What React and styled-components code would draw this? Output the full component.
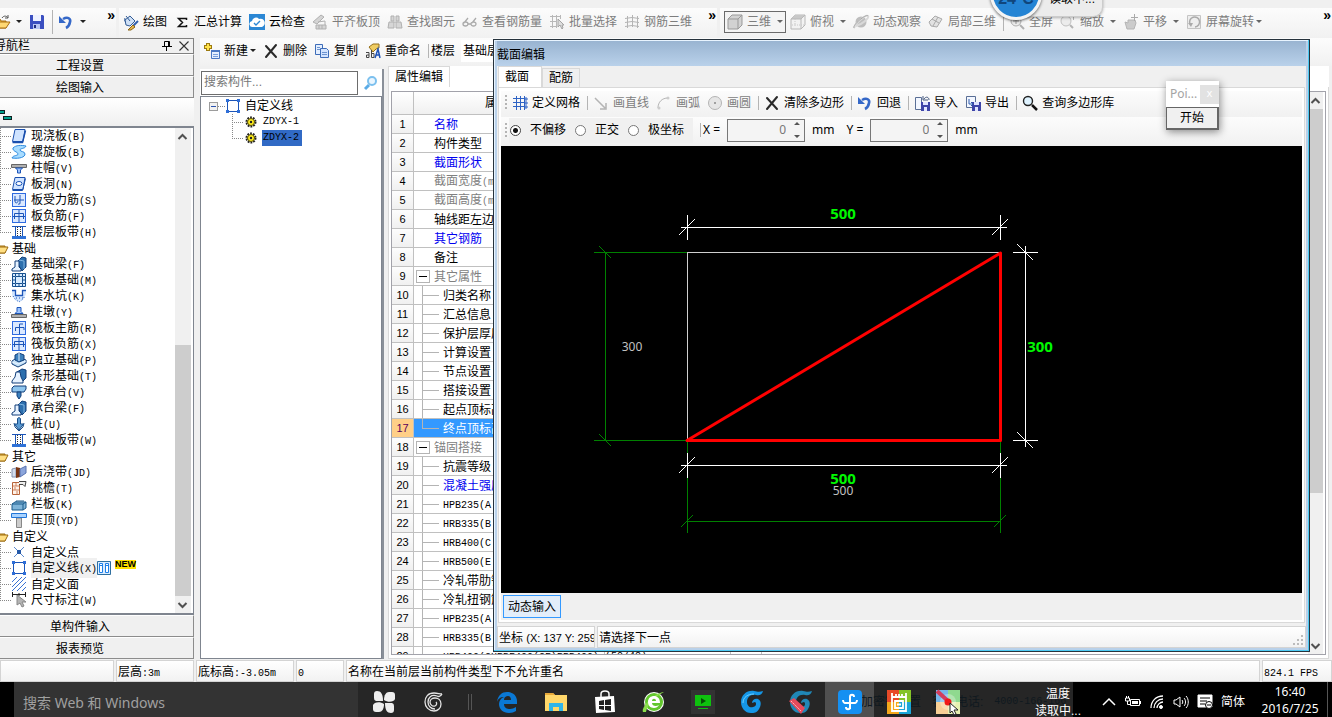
import React from 'react'
import styled, { createGlobalStyle, css } from 'styled-components'

/* Font stacks: interface text, and the half width face of the tree labels    */
const UI = '"Liberation Sans", "Noto Sans CJK SC", sans-serif'
const MONO = '"Liberation Mono", "Noto Sans CJK SC", monospace'

const GlobalStyle = createGlobalStyle`
  * { box-sizing: border-box; }
  body {
    margin: 0;
    overflow: hidden;
    background: #f0f0f0;
    color: #000;
    font: 12px/16px ${UI};
  }
  button, input, select { font: inherit; color: inherit; }
`

/* ------------------------------- Icons ------------------------------------ */

const Svg = styled.svg`
  flex: none;
  display: block;
  overflow: visible;
  width: ${p => p.$size || 16}px;
  height: ${p => p.$size || 16}px;
`

const B = '#1c55b8'
const sq = <rect x="1.5" y="1.5" width="13" height="13" fill="#dbe9ff" stroke="#2f6be0" />
const beam = (
  <>
    <path d="M6 6l5-5 4 1v9l-4 4z" fill="#2c6fae" stroke="#123f7a" />
    <path d="M8 4l5 1v8" stroke="#7fb4e0" fill="none" />
    <path d="M1 15v-2l3-2V5h4v6l2 2v2z" fill="#e6f2ff" stroke="#123f7a" />
  </>
)
const corners = (
  <>
    <path d="M2.5 2.5h11v11h-11z" fill="#fff" stroke={B} />
    <path d="M1 1h3v3H1zM12 1h3v3h-3zM1 12h3v3H1zM12 12h3v3h-3z" fill="#2e6ed8" />
  </>
)

const drawings = {
  slab: (
    <>
      <path d="M4 1.5h10l-2 12H1.500z" fill="#cfe3ff" stroke="#1a4fae" />
      <path d="M1.500 14.500h10l3-12" stroke="#1a4fae" strokeWidth="1.500" fill="none" />
    </>
  ),
  spiral: <path d="M2 4c3-3 8-3 13-2-1 3-6 2-6 4s5 1 5 4-5 5-13 4c1-3 6-2 6-4S1 7 2 4z" fill="#a8dcff" stroke="#2c8ae0" />,
  cap: (
    <>
      <path d="M.5 4.500h15v3H.5z" fill="#b0b0b0" stroke="#666" />
      <path d="M4.500 8h7l-2 2v3h-3v-3z" fill="#9cc4ff" stroke={B} />
    </>
  ),
  hole: (
    <>
      <path d="M4 1.5h10l-2 12H1.500z" fill="#cfe3ff" stroke="#1a4fae" />
      <path d="M1.500 14.500h10l3-12" stroke="#1a4fae" fill="none" />
      <ellipse cx="8" cy="7.5" rx="3" ry="2" fill="#fff" stroke={B} />
    </>
  ),
  force: <>{sq}<path d="M4 4v5c0 3 3 2 3 0M13 8H3M9 3v8c0 2-2 1-2 1" fill="none" stroke={B} /></>,
  neg: <>{sq}<path d="M3.500 11V5.500h9V11M8 2v12M2 8.500h12" fill="none" stroke={B} /></>,
  main: <>{sq}<path d="M4.500 11V7.500H13V10M8.500 14V4H12" fill="none" stroke={B} /></>,
  strip: (
    <>
      <path d="M1 12h14v3H1z" fill="#2f72d8" />
      <path d="M1 2.500h14M4.500 3v9M11.500 3v9" stroke={B} />
      <path d="M6.500 3v9M9.500 3v9" stroke="#333" strokeDasharray="1 1" />
    </>
  ),
  folder: (
    <>
      <path d="M1 13V4h5l1 2h6v7z" fill="#f6c64c" stroke="#9b6a10" />
      <path d="M1 13l3-6h12l-3 6z" fill="#ffdf83" stroke="#9b6a10" />
    </>
  ),
  beam,
  raft: <path d="M1.500 1.500h13v13h-13zM4.500 4.500h7v7h-7zM4.500 1v3M8 1v3M11.500 1v3M4.500 12v3M8 12v3M11.500 12v3M1 4.500h3M1 8h3M1 11.500h3M12 4.500h3M12 8h3M12 11.500h3" fill="#d8ecff" stroke="#17508f" />,
  pit: (
    <>
      <path d="M1 3h4v5h6V3h4v3l-3 6-4 2-4-2-3-5z" fill="#d3e6ff" />
      <path d="M1 2.500h3.500v5h7v-5H15" fill="none" stroke={B} strokeWidth="1.300" />
      <path d="M2 8l2 3 4 3 4-3 2-3M5 10h7" fill="none" stroke={B} strokeDasharray="1 2" />
    </>
  ),
  pier: (
    <>
      <path d="M.5 10.500h15v3H.5z" fill="#b0b0b0" stroke="#666" />
      <path d="M6 3.500h4v4l2 2H4l2-2z" fill="#9cc4ff" stroke={B} />
    </>
  ),
  indep: (
    <>
      <path d="M1 9l6-4 8 3v3l-8 4-6-3z" fill="#c4e1f7" stroke="#123f7a" />
      <path d="M4 3l4-2 5 2v5l-5 2-4-2z" fill="#3c80bd" stroke="#123f7a" />
      <path d="M8 1v8M1 10l6 2 8-3" fill="none" stroke="#e6f2ff" />
    </>
  ),
  bar: (
    <>
      <path d="M6 4l5-3 4 1v8l-4 4z" fill="#2c6fae" stroke="#123f7a" />
      <path d="M1 15v-2l3-4 1-5h4l1 5 2 4v2z" fill="#e6f2ff" stroke="#123f7a" />
    </>
  ),
  pilecap: (
    <>
      <path d="M1 4l2-2h12v3l-2 3H1z" fill="#8ec5ee" stroke="#123f7a" />
      <path d="M6 8h4v4l-2 3-2-3z" fill="#3c80bd" stroke="#123f7a" />
    </>
  ),
  pile: (
    <>
      <path d="M6.500 2.500l1.500-1 1.500 1V8h3L8 14 3.500 8h3z" fill="#5c9cd4" stroke="#1b4f8a" />
      <path d="M3 7l1 4 4 4 4-4 1-4" fill="none" stroke="#1b4f8a" />
    </>
  ),
  pour: (
    <>
      <path d="M1 5l4-1v9H1z" fill="#d4dcea" stroke="#8693b0" />
      <path d="M5 3l4 1v9l-4 1z" fill="#7a3512" />
      <path d="M9 5l6-3v7l-6 4z" fill="#8ba5db" stroke="#5872b0" />
    </>
  ),
  eave: (
    <>
      <path d="M1.500 2.500h7v12h-7z" fill="#fff3e8" stroke="#b8643a" />
      <path d="M2 6h6M2 10h6M5 3v3M4 7v3M6 11v3" stroke="#d08460" />
      <path d="M8 1.500h7l-1 5-2-2H8" fill="#eee" stroke="#444" />
    </>
  ),
  rail: (
    <>
      <path d="M1 8l3-2h11v6l-3 2H1z" fill="#7fb4d8" stroke="#1b5a8a" />
      <path d="M1 8h11v6M12 8l3-2M5 6v-1h8" fill="none" stroke="#1b5a8a" />
    </>
  ),
  press: (
    <>
      <path d="M5.500 6h5v9.500h-5z" fill="#ccc" stroke="#888" />
      <path d="M.5 1.500h15v4H.5z" fill="#a9d3ff" stroke="#2276d8" />
    </>
  ),
  point: (
    <>
      <path d="M3 3l10 10M13 3L3 13" stroke="#5c8ace" />
      <path d="M6 6h4v4H6z" fill="#2458a8" />
    </>
  ),
  line: corners,
  area: <path d="M1 6l5-5M1 11L11 1M1 15L15 1M6 15l9-9M11 15l4-4" stroke="#3a72d4" />,
  note: (
    <>
      <path d="M1 2.500h14M1.500 0v5M14.500 0v5M8 1v3" stroke="#222" />
      <path d="M6 3v10l3-2 2 4 2-1-2-4h4z" fill="#b4b4b4" stroke="#888" />
    </>
  ),
  gear: (
    <>
      <circle cx="8" cy="8" r="4.500" fill="none" stroke="#222" strokeWidth="2" strokeDasharray="1.800 1.020" />
      <circle cx="8" cy="8" r="3.500" fill="#ffee20" stroke="#554c00" />
      <circle cx="8" cy="8" r="1.200" fill="#222" />
    </>
  ),
  open: (
    <>
      <path d="M1 14V5h5l1 2h5v7z" fill="#f3bb3c" stroke="#a86c10" />
      <path d="M1 14l3-6h12l-4 6z" fill="#ffd873" stroke="#a86c10" />
      <path d="M8 4c2-3 5-2 6 0M14 1v3h-3" fill="none" stroke="#555" />
    </>
  ),
  save: (
    <>
      <path d="M1 1h13l1 1v13H1z" fill="#3b4fc0" />
      <path d="M4 1h8v6H4z" fill="#eef2ff" />
      <path d="M4 10h7v5H4z" fill="#b9c6f3" />
      <path d="M5 11h2v3H5z" fill="#1f2d80" />
    </>
  ),
  undo: (
    <>
      <path d="M5 5c5-3 8 0 7 3-.500 3-2 5-4 6" fill="none" stroke="#3568c8" strokeWidth="2.600" />
      <path d="M1 2v7h7z" fill="#3568c8" />
    </>
  ),
  paint: (
    <>
      <path d="M2 6l5-4 5 5-5 5-4-1z" fill="#cfe0f5" stroke="#335c96" />
      <path d="M3 2l4 5M2 4c-1 2 0 4 1 4" fill="none" stroke="#335c96" />
      <path d="M15 7l-5 5" stroke="#2f5fae" strokeWidth="2" />
      <path d="M10 11l2 2-4 3H5z" fill="#e7b44a" stroke="#8a6414" />
    </>
  ),
  sum: <path d="M12.500 6V4.500h-8l4 4-4 4h8V11" fill="none" stroke="#111" strokeWidth="1.500" />,
  cloud: (
    <>
      <path d="M0 0h16v16H0z" fill="#2b87d4" />
      <path d="M4 13a3 3 0 0 1-1-6 4 4 0 0 1 7-2 4 4 0 0 1 3 8z" fill="#fff" />
      <path d="M5 9l2 2 4-4" fill="none" stroke="#2b87d4" strokeWidth="1.400" />
    </>
  ),
  level: (
    <>
      <path d="M1 8l8-7 3 2-7 7zM4 11h10v4H4z" fill="#d4d4d4" stroke="#b0b0b0" />
      <path d="M6 8l7-1v4M7 11v4M10 11v4" fill="none" stroke="#b0b0b0" />
    </>
  ),
  find: <path d="M4 2h3v5H4zM9 2h3v5H9zM2 8h5v6H1zM9 8h5l1 6H9zM7 8h2" fill="#d6d6d6" stroke="#b0b0b0" />,
  glasses: <path d="M2 9l4-5M10 9l4-5M1 10a2.500 2 0 1 0 5 0a2.500 2 0 1 0-5 0M9 10a2.500 2 0 1 0 5 0a2.500 2 0 1 0-5 0M6 10h3" fill="none" stroke="#aaa" strokeWidth="1.300" />,
  pick: (
    <>
      <path d="M1 2.500h11M1 7.500h7M1 12.500h7M3.500 1v13M7.500 1v13M11.500 1v4" stroke="#b8b8b8" />
      <path d="M9 5v8l2-2 2 4 1-1-1-3h2z" fill="#ddd" stroke="#a4a4a4" />
    </>
  ),
  rebar: <path d="M3.500 2v12M8.500 1v12M13.500 2v12M1 4.500l7-1 7 1M1 8.500l7-1 7 1M1 12.500l7-1 7 1" fill="none" stroke="#b4b4b4" />,
  cube: (
    <>
      <path d="M1 5l4-4h10v10l-4 4H1z" fill="#d2d2d2" stroke="#999" />
      <path d="M1 5h10v10M11 5l4-4" fill="none" stroke="#999" />
    </>
  ),
  wire: (
    <>
      <path d="M1 5l4-4h10v10l-4 4H1z" fill="#f2f2f2" stroke="#b8b8b8" />
      <path d="M1 5l4-4h10l-4 4z" fill="#c8c8c8" />
      <path d="M1 5h10v10M11 5l4-4" fill="none" stroke="#b8b8b8" />
      <path d="M5 1v10H1M5 11h10" fill="none" stroke="#c8c8c8" strokeDasharray="1 1" />
    </>
  ),
  orbit: (
    <>
      <circle cx="8" cy="8" r="5.500" fill="#bdbdbd" />
      <path d="M2 14C-1 12 13 0 15 2s-7 9-12 10" fill="none" stroke="#d8d8d8" strokeWidth="2" />
      <path d="M1 14C-1 11 14-1 15 2" fill="none" stroke="#a8a8a8" />
    </>
  ),
  part: <path d="M1 8l6-6 7 3-5 8-6-1zM4 5l7 4M10 3L5 12" fill="#e2e2e2" stroke="#aaa" />,
  zoomin: (
    <>
      <circle cx="7" cy="7" r="5" fill="#ececec" stroke="#b0b0b0" />
      <path d="M11 11l4 4" stroke="#b0b0b0" strokeWidth="2" />
      <path d="M4 7h6M7 4v6" stroke="#999" />
    </>
  ),
  zoom: (
    <>
      <circle cx="6" cy="7" r="5" fill="#ececec" stroke="#c0c0c0" />
      <path d="M10 11l3 3" stroke="#b4b4b4" strokeWidth="2" />
      <path d="M13.500 1v5M12 3l1.500-2L15 3" fill="none" stroke="#b4b4b4" />
    </>
  ),
  pan: (
    <>
      <path d="M2 8l3 1V6h7l1 3-2 6H4z" fill="#cbcbcb" stroke="#b4b4b4" />
      <path d="M11.500 0v7M8 3.500h7" stroke="#aaa" />
    </>
  ),
  rotate: (
    <>
      <path d="M1.500 1.500h13v13h-13z" fill="#eee" stroke="#c4c4c4" />
      <path d="M4 10a5 5 0 1 1 5 3" fill="none" stroke="#aaa" strokeWidth="1.500" />
      <path d="M2 9l5 0-2 4z" fill="#aaa" />
    </>
  ),
  create: (
    <>
      <path d="M4 0v8M0 4h8" stroke="#9c7a10" strokeWidth="4" />
      <path d="M4 1v6M1 4h6" stroke="#ffe24a" strokeWidth="2" />
      <path d="M7.500 7.500h8v8h-8z" fill="#e4efff" stroke="#4a78c4" />
      <path d="M7 7h9v2H7z" fill="#4a78c4" />
      <path d="M9 11.500h5M9 13.500h5" stroke="#7aa0dc" />
    </>
  ),
  cross: <path d="M3 3l10 11M13 2L3 14" stroke="#2a2a2a" strokeWidth="2" strokeLinecap="round" />,
  copy: (
    <>
      <path d="M1.500 1.500h7v10h-7z" fill="#e4efff" stroke="#3e6db8" />
      <path d="M6.500 5.500h6l2 2v7h-8z" fill="#d3e4ff" stroke="#3e6db8" />
      <path d="M8 9.500h5M8 11.500h5M3 4.500h3M3 6.500h3" stroke="#6b93d0" />
    </>
  ),
  rename: (
    <>
      <path d="M4 4l4-3h6v4l-3 1-3 3z" fill="#f0cd62" stroke="#96701a" />
      <path d="M1 9.500h3v5H1.500v-2.500H4M6.500 7v7.500H9v-4H6.500" fill="none" stroke="#444" />
      <path d="M10 15l3-9 2 9M11 12h4" fill="none" stroke="#1e53b8" strokeWidth="1.500" />
    </>
  ),
  search: (
    <>
      <circle cx="9" cy="6" r="4" fill="#eaf6ff" stroke="#7cc0ee" strokeWidth="2" />
      <path d="M6 10l-4 4" stroke="#5aabe6" strokeWidth="3" />
    </>
  ),
  grid: (
    <>
      <path d="M4.500 1v14M8.500 1v14M12.500 1v14M1 3.500h12M1 7.500h12M1 11.500h12" stroke="#2f63c4" />
      <path d="M13 3h2v2h-2zM13 7h2v2h-2zM13 11h2v2h-2z" fill="none" stroke="#2f63c4" />
    </>
  ),
  arrow: <path d="M2 3l10 10M13 8v6H7" fill="none" stroke="#b4b4b4" strokeWidth="1.500" />,
  arc: (
    <>
      <path d="M2 13C2 7 6 3 12 3" fill="none" stroke="#b4b4b4" />
      <circle cx="3" cy="13" r="1.500" fill="#ccc" />
      <circle cx="12" cy="3" r="1.500" fill="#ccc" />
    </>
  ),
  circle: (
    <>
      <circle cx="8" cy="8" r="6.500" fill="#e6e6e6" stroke="#b4b4b4" />
      <circle cx="8" cy="8" r="1" fill="#888" />
    </>
  ),
  importIcon: (
    <>
      <path d="M1.500 2.500h6v12h-6z" fill="#f3f7ff" stroke="#5a6f96" />
      <path d="M7 7h9v9H7z" fill="#3e45a8" />
      <path d="M9 7h5v3H9zM10 12h3v4h-3z" fill="#e1e5ff" />
      <path d="M9 1v4h5M10 4c2-3 5-2 5 1" fill="none" stroke="#44587e" />
    </>
  ),
  exportIcon: (
    <>
      <path d="M1.500 1.500h9v11h-9z" fill="#f3f7ff" stroke="#5a6f96" />
      <path d="M7 7h9v9H7z" fill="#3e45a8" />
      <path d="M9 7h5v3H9zM10 12h3v4h-3z" fill="#e1e5ff" />
      <path d="M4 4v5h4M6 7l2 2-2 2" fill="none" stroke="#2f5cae" />
    </>
  ),
  lens: (
    <>
      <circle cx="6" cy="6" r="4.500" fill="#dff3ff" stroke="#222" strokeWidth="1.400" />
      <path d="M10 10l5 5" stroke="#111" strokeWidth="2.500" />
    </>
  ),
  pin: <path d="M5.500 3.500h5v5h-5zM9.500 3v5M3 8.500h10M7.500 9v4" stroke="#000" fill="none" />,
  close: <path d="M4 4l8 8M12 4l-8 8" stroke="#333" fill="none" />
}

const Icon = ({ name, size }) => (
  <Svg $size={size} viewBox="0 0 16 16" fill="none" aria-hidden="true">{drawings[name]}</Svg>
)

/* ------------------------------ Toolbars ---------------------------------- */

const Window = styled.div`
  display: flex;
  flex-direction: column;
  height: 100vh;
  padding-top: 8px;
`

const Bands = styled.div`
  display: flex;
  flex: none;
  gap: 3px;
  height: 30px;
`

const Band = styled.div`
  display: flex;
  flex: ${p => (p.$grow ? 1 : 'none')};
  align-items: center;
  gap: 7px;
  min-width: ${p => p.$min || 0}px;
  height: ${p => p.$height || 30}px;
  padding: 0 1px 3px 4px;
  white-space: nowrap;
  background: linear-gradient(#fcfcfc, #f1f1f1);
`

const Tool = styled.button`
  display: flex;
  flex: none;
  align-items: center;
  gap: 4px;
  height: 22px;
  padding: 0;
  border: 0;
  background: none;
  color: ${p => (p.$off ? '#7d7d7d' : '#000')};
  ${p => p.$boxed && css`
    margin-right: -3px;
    padding: 0 2px;
    border: 1px solid #6b6b6b;
    background: #f4f4f4;
  `}
  ${p => p.$cropped && css`
    margin-left: -10px;
  `}
`

const Caret = styled.i`
  flex: none;
  margin-left: ${p => (p.$tight ? -2 : 2)}px;
  border: 3px solid transparent;
  border-top-color: ${p => (p.$off ? '#666' : '#222')};
  border-bottom-width: 0;
`

const Separator = styled.i`
  flex: none;
  width: 1px;
  height: ${p => p.$height || 14}px;
  margin-right: -2px;
  background: #b4b4b4;
`

const Chevron = styled.button`
  align-self: flex-start;
  margin-left: ${p => (p.$end ? 'auto' : '9px')};
  padding: 0;
  border: 0;
  background: none;
  font: bold 14px/14px ${UI};
`

const Grip = styled.i`
  flex: none;
  width: 2px;
  height: 15px;
  margin-right: -2px;
  background: repeating-linear-gradient(#b4b4b4 0 2px, transparent 2px 4px);
`

const ToolItem = ({ icon, label, off, caret, boxed, cropped }) => (
  <Tool $off={off} $boxed={boxed} $cropped={cropped} aria-label={label || icon}>
    <Icon name={icon} />
    {label}
    {caret && <Caret $off={off} $tight={caret === 'tight'} />}
  </Tool>
)

/* ---------------------------- Navigation pane ----------------------------- */

const Main = styled.div`
  position: relative;
  display: flex;
  flex: 1;
  min-height: 0;
`

/* The pane starts left of the visible desktop                                */
const Nav = styled.nav`
  display: flex;
  flex: none;
  flex-direction: column;
  width: 227px;
  margin-left: -33px;
  padding-bottom: 1px;
`

const NavTitle = styled.div`
  display: flex;
  align-items: center;
  height: 16px;
  padding-left: 26px;
  border: 1px solid #808080;
  span { flex: 1; }
`

const NavButton = styled.button`
  flex: none;
  height: 22px;
  padding: 2px 0 0;
  border: 0;
  border-top: 1px solid #fff;
  border-right: 1px solid #8c8c8c;
  border-bottom: 1px solid #8c8c8c;
  background: #f0f0f0;
`

const NavTools = styled.div`
  flex: none;
  height: 28px;
  padding: 10px 0 0 33px;
  background: linear-gradient(#fff, #efefef);
`

const TreeBox = styled.div`
  display: flex;
  flex: 1;
  min-height: 0;
  border: 1px solid #7f858f;
  border-width: 2px 1px;
  background: #fff;
`

const List = styled.ul`
  flex: 1;
  margin: 0;
  padding: 0;
  overflow: hidden;
  list-style: none;
`

const TreeRow = styled.li`
  display: flex;
  align-items: center;
  height: 16px;
  padding-left: ${p => (p.$group ? 24 : 32)}px;
  white-space: nowrap;
  svg { margin-right: 4px; }
`

const Guide = styled.i`
  flex: none;
  width: 11px;
  height: 16px;
  background:
    repeating-linear-gradient(#888 0 1px, transparent 1px 2px) 0 0 / 1px ${p => (p.$last ? '50%' : '100%')} no-repeat,
    repeating-linear-gradient(90deg, #888 0 1px, transparent 1px 2px) 0 8px / 100% 1px no-repeat;
`

const Label = styled.span`
  padding-top: 2px;
  line-height: 16px;
  background: ${p => (p.$hot ? '#f0f0f0' : 'none')};
`

const Half = styled.span`
  font: 10px/16px ${MONO};
`

const FreshTag = styled.span`
  align-self: flex-start;
  background: #ffe100;
  font: bold 9px/9px ${UI};
`

const Track = styled.div`
  display: flex;
  flex: none;
  flex-direction: column;
  width: ${p => p.$width || 16}px;
  margin-right: 2px;
  background: #f0f0f0;
`

const Thumb = styled.div`
  flex: ${p => p.$size};
  background: #cdcdcd;
`

const Space = styled.div`
  flex: ${p => p.$size};
`

const Arrow = ({ down }) => (
  <Svg $size={17} viewBox="0 0 17 17" fill="none" aria-hidden="true">
    <path d={down ? 'M3.500 7l4 4 4-4' : 'M3.500 11l4-4 4 4'} stroke="#505050" strokeWidth="2" />
  </Svg>
)

const navRows = [
  ['slab', '现浇板', '(B)'], ['spiral', '螺旋板', '(B)'], ['cap', '柱帽', '(V)'],
  ['hole', '板洞', '(N)'], ['force', '板受力筋', '(S)'], ['neg', '板负筋', '(F)'],
  ['strip', '楼层板带', '(H)'],
  ['folder', '基础'],
  ['beam', '基础梁', '(F)'], ['raft', '筏板基础', '(M)'], ['pit', '集水坑', '(K)'],
  ['pier', '柱墩', '(Y)'], ['main', '筏板主筋', '(R)'], ['neg', '筏板负筋', '(X)'],
  ['indep', '独立基础', '(P)'], ['bar', '条形基础', '(T)'], ['pilecap', '桩承台', '(V)'],
  ['beam', '承台梁', '(F)'], ['pile', '桩', '(U)'], ['strip', '基础板带', '(W)'],
  ['folder', '其它'],
  ['pour', '后浇带', '(JD)'], ['eave', '挑檐', '(T)'], ['rail', '栏板', '(K)'],
  ['press', '压顶', '(YD)'],
  ['folder', '自定义'],
  ['point', '自定义点', ''], ['line', '自定义线', '(X)', true], ['area', '自定义面', ''],
  ['note', '尺寸标注', '(W)']
]

const NavPane = () => (
  <Nav>
    <NavTitle>
      <span>导航栏</span>
      <Icon name="pin" />
      <Icon name="close" size={18} />
    </NavTitle>
    <NavButton>工程设置</NavButton>
    <NavButton>绘图输入</NavButton>
    <NavTools>
      <svg width="12" height="10" aria-hidden="true">
        <path d="M0 2h5M3 8h9" stroke="#102020" strokeWidth="4" />
        <path d="M0 2h4M4 8h7" stroke="#00a08c" strokeWidth="2" />
      </svg>
    </NavTools>
    <TreeBox>
      <List>
        {navRows.map(([icon, text, hint, fresh], i) => {
          const next = navRows[i + 1]
          const group = icon === 'folder'
          return (
            <TreeRow key={i} $group={group}>
              {!group && <Guide $last={!next || next[0] === 'folder'} />}
              <Icon name={icon} />
              <Label $hot={fresh}>{text}{hint && <Half>{hint}</Half>}</Label>
              {fresh && (
                <>
                  <Svg $size={14} viewBox="1 1 14 14" aria-hidden="true">
                    <path d="M1.500 1.500h13v13h-13z" fill="#d9ecff" stroke="#2f6f9f" />
                    <path d="M3.500 3.500h3v9h-3zM9.500 3.500h3v9h-3zM4 5.500h3M10 5.500h3" fill="#fff" stroke="#1d7fe8" />
                  </Svg>
                  <FreshTag>NEW</FreshTag>
                </>
              )}
            </TreeRow>
          )
        })}
      </List>
      <Track>
        <Arrow />
        <Space $size={200} />
        <Thumb $size={250} />
        <Arrow down />
      </Track>
    </TreeBox>
    <NavButton>单构件输入</NavButton>
    <NavButton>报表预览</NavButton>
  </Nav>
)

/* --------------------------- Component list ------------------------------- */

const Work = styled.div`
  display: flex;
  flex: 1;
  flex-direction: column;
  min-width: 0;
  margin-left: 6px;
`

const Panes = styled.div`
  display: flex;
  flex: 1;
  gap: 4px;
  min-height: 0;
`

const FloorField = styled.label`
  display: flex;
  align-items: center;
  gap: 6px;
  margin-left: -3px;
`

const FloorSelect = styled.select`
  appearance: none;
  width: 100px;
  height: 22px;
  padding: 0 2px;
  border: 0;
  border-radius: 0;
  background: #fff;
`

const Parts = styled.section`
  display: flex;
  flex: none;
  flex-direction: column;
  width: 184px;
  margin: 3px 0 1px;
  border-right: 2px solid #8a9099;
  background: #fff;
`

const SearchRow = styled.form`
  display: flex;
  align-items: center;
  gap: 5px;
  height: 27px;
  padding: 1px 0 0 1px;
`

const SearchInput = styled.input`
  width: 157px;
  height: 24px;
  padding: 0 2px 3px;
  border: 1px solid #6d6d6d;
  outline: 0;
  background: #fff;
  &::placeholder { color: #777; opacity: 1; }
`

const PlainButton = styled.button`
  padding: 0;
  border: 0;
  background: none;
`

const PartTree = styled.ul`
  flex: 1;
  margin: 0;
  padding: 1px 0 0;
  border: 1px solid #7f858f;
  list-style: none;
`

const PartRow = styled.li`
  display: flex;
  align-items: center;
  height: 16px;
  padding-left: ${p => (p.$child ? 31 : 8)}px;
  svg { margin-right: ${p => (p.$child ? 3 : 4)}px; }
`

const Expander = styled.button`
  width: 9px;
  height: 9px;
  padding: 0;
  border: 1px solid #9c9c9c;
  background: linear-gradient(#2b53b0, #2b53b0) center / 5px 1px no-repeat #f2f2f2;
`

const Dots = styled.i`
  width: 7px;
  height: 1px;
  background: repeating-linear-gradient(90deg, #888 0 1px, transparent 1px 2px);
`

const PartName = styled.span`
  padding: 0 3px 0 1px;
  background: ${p => (p.$selected ? '#316ac5' : 'none')};
  font: 10px/16px ${MONO};
`

/* --------------------------- Property table ------------------------------- */

const Props = styled.section`
  display: flex;
  flex: 1;
  flex-direction: column;
  min-width: 0;
  margin: 0 3px 1px 0;
`

const TabStrip = styled.div`
  display: flex;
  flex: none;
  align-items: flex-end;
  height: 21px;
  background: ${p => p.$color || '#fff'};
`

const Tab = styled.button`
  height: ${p => (p.$active ? 21 : 19)}px;
  padding: 0 ${p => (p.$wide ? 12 : 6)}px 0 6px;
  border: 1px solid #d9d9d9;
  border-bottom: 0;
  background: ${p => (p.$active ? '#fff' : '#f0f0f0')};
`

const Sheet = styled.div`
  display: flex;
  flex: 1;
  min-height: 0;
  padding: 4px 2px 3px;
  border: 1px solid #d9d9d9;
  border-top: 0;
  background: #fff;
`

const SheetFrame = styled.div`
  display: flex;
  flex: 1;
  min-width: 0;
  overflow: hidden;
  border: 1px solid #a2a2aa;
`

const TableClip = styled.div`
  flex: 1;
  overflow: hidden;
`

const Table = styled.table`
  width: 370px;
  table-layout: fixed;
  border-spacing: 0;
  th, td {
    height: 19px;
    padding: 0;
    overflow: hidden;
    border-right: 1px solid #c0c0c0;
    border-bottom: 1px solid #c0c0c0;
    font-weight: normal;
    white-space: nowrap;
  }
  thead th {
    height: 23px;
    background: linear-gradient(#fff, #f0f0f0);
  }
`

const Number = styled.th`
  background: ${p => (p.$active ? '#ffcf87' : 'linear-gradient(#fdfdfd, #f0f0f0)')};
  color: ${p => (p.$active ? '#5a005a' : '#000')};
  font-size: 11px;
`

const Name = styled.div`
  display: flex;
  align-items: center;
  height: 18px;
  padding-left: ${p => (p.$plain ? 20 : p.$head ? 2 : 8)}px;
  background: ${p => (p.$active ? '#3399ff' : 'none')};
  color: ${p => p.$color || '#000'};
  gap: 4px;
  span { padding-top: 1px; }
`

const Fold = styled.button`
  width: 14px;
  height: 13px;
  padding: 0;
  border: 1px solid #b4b4b4;
  background: linear-gradient(#000, #000) center / 8px 1px no-repeat #fff;
`

const Branch = styled.i`
  align-self: stretch;
  width: 17px;
  background:
    linear-gradient(#b4b4b4, #b4b4b4) 0 0 / 1px ${p => (p.$last ? '50%' : '100%')} no-repeat,
    linear-gradient(#b4b4b4, #b4b4b4) 0 50% / 100% 1px no-repeat;
`

const BLUE = '#0000f0'
const GREY = '#808080'

const properties = [
  { text: '名称', color: BLUE, plain: true },
  { text: '构件类型', plain: true },
  { text: '截面形状', color: BLUE, plain: true },
  { text: '截面宽度', half: '(mm)', color: GREY, plain: true },
  { text: '截面高度', half: '(mm)', color: GREY, plain: true },
  { text: '轴线距左边线', plain: true },
  { text: '其它钢筋', color: BLUE, plain: true },
  { text: '备注', plain: true },
  { text: '其它属性', color: GREY, head: true },
  { text: '归类名称' },
  { text: '汇总信息' },
  { text: '保护层厚度' },
  { text: '计算设置' },
  { text: '节点设置' },
  { text: '搭接设置' },
  { text: '起点顶标高' },
  { text: '终点顶标高', color: '#fff', active: true },
  { text: '锚固搭接', color: GREY, head: true },
  { text: '抗震等级' },
  { text: '混凝土强度', color: BLUE },
  { half: 'HPB235(A' },
  { half: 'HRB335(B' },
  { half: 'HRB400(C' },
  { half: 'HRB500(E' },
  { text: '冷轧带肋钢筋' },
  { text: '冷轧扭钢筋' },
  { half: 'HPB235(A' },
  { half: 'HRB335(B' },
  { half: 'HRB400(CHRBF400(CF)RRB400)', value: '(50/48)' }
]

const PropertyTable = () => (
  <Table>
    <colgroup>
      <col width="22" /><col width="191" /><col width="126" /><col width="31" />
    </colgroup>
    <thead>
      <tr><th /><th>属性名称</th><th>属性值</th><th /></tr>
    </thead>
    <tbody>
      {properties.map((row, i) => (
        <tr key={i}>
          <Number $active={row.active}>{i + 1}</Number>
          <td>
            <Name $plain={row.plain} $head={row.head} $active={row.active} $color={row.color}>
              {row.head && <Fold aria-label={row.text} />}
              {!row.head && !row.plain && <Branch $last={row.active} />}
              <span>{row.text}{row.half && <Half>{row.half}</Half>}</span>
            </Name>
          </td>
          <td><Half>{row.value}</Half></td>
          <td />
        </tr>
      ))}
    </tbody>
  </Table>
)

/* --------------------------- Section dialog ------------------------------- */

/* The dialog floats over the panes                                           */
const Dialog = styled.section`
  position: absolute;
  top: 1px;
  right: 22px;
  bottom: 8px;
  left: 493px;
  display: flex;
  flex-direction: column;
  padding: 1px 3px 3px;
  border: 1px solid #26323c;
  background: #b9d1ea;
  box-shadow: inset -1px -1px #4cc9f2, inset 1px 1px #e8f4ff;
`

const DialogTitle = styled.h1`
  flex: none;
  height: 25px;
  margin: 0;
  background: linear-gradient(#99b4d1, #b9d1ea);
  font: 12px/28px ${UI};
`

const DialogBody = styled.div`
  display: flex;
  flex: 1;
  flex-direction: column;
  min-height: 0;
  background: #f0f0f0;
`

const DialogTabs = styled(TabStrip)`
  padding-left: 1px;
`

const TabPanel = styled.div`
  display: flex;
  flex: 1;
  flex-direction: column;
  min-height: 0;
  margin: 0 1px;
  padding: 3px 2px 2px;
  border: 1px solid #d9d9d9;
  background: #fff;
`

const Radios = styled.div`
  display: flex;
  align-items: center;
  gap: 9px;
  height: 25px;
  margin-left: -3px;
  padding: 0 9px 0 1px;
  background: #f0f0f0;
  label { display: flex; align-items: center; gap: 9px; }
`

const Radio = styled.input`
  appearance: none;
  width: 11px;
  height: 11px;
  margin: 0;
  border: 1px solid #777;
  border-radius: 50%;
  background: #fff;
  &:checked {
    border-color: #444;
    background: radial-gradient(#111 0 2px, #fff 3px);
  }
`

const Field = styled.label`
  display: flex;
  align-items: center;
  gap: 7px;
  margin: 0 8px 0 -3px;
  font: 12px/16px "Noto Sans", sans-serif;
`

const Spin = styled.span`
  display: flex;
  align-items: center;
  justify-content: space-between;
  width: 78px;
  height: 23px;
  padding: 0 4px 0 18px;
  border: 1px solid #777;
  background: #f4f4f4;
  color: #777;
  input {
    width: 40px;
    padding: 0;
    border: 0;
    outline: 0;
    background: none;
    text-align: right;
  }
`

const CanvasBox = styled.div`
  flex: 1;
  min-height: 0;
  background: #000;
  svg { display: block; width: 100%; height: 100%; }
`

const Foot = styled.div`
  flex: none;
  height: 27px;
  padding: 2px;
  background: #f0f0f0;
`

const InputToggle = styled.button`
  display: block;
  width: 58px;
  height: 23px;
  padding: 0;
  border: 1px solid #3399ff;
  background: #e3eefa;
`

const Status = styled.div`
  display: flex;
  flex: none;
  gap: 2px;
  height: 22px;
  margin-top: ${p => (p.$inset ? 3 : 0)}px;
`

const Cell = styled.div`
  flex: ${p => (p.$width ? `0 0 ${p.$width}px` : 1)};
  overflow: hidden;
  padding-left: 1px;
  border: 1px solid #d4d4d4;
  background: linear-gradient(#fff, #f2f2f2);
  line-height: 22px;
  white-space: nowrap;
`

const Small = styled.span`
  font-size: 11px;
`

const Resize = styled.svg`
  float: right;
  margin: 8px 1px 0 0;
`

const SpinBox = ({ axis }) => (
  <Field>
    {axis} =
    <Spin>
      <input defaultValue="0" aria-label={axis} />
      <svg width="6" height="18" fill="#555" aria-hidden="true">
        <path d="M0 4l3-3 3 3zM0 14l3 3 3-3z" />
      </svg>
    </Spin>
    mm
  </Field>
)

/* A slash through the corner of a dimension                                  */
const slash = (x, y, r, down) => (down ? `M${x - r} ${y - r}l${2 * r} ${2 * r}` : `M${x - r} ${y + r}l${2 * r} ${-2 * r}`)

const Drawing = () => (
  <CanvasBox>
    <svg viewBox="501 146 801 447" fill="none" role="img" aria-label="截面">
      <g stroke="#008000" shapeRendering="crispEdges">
        <path d="M594 252.500h93M594 440.500h93M605.500 252v188" />
        <path d="M687.500 440v93M1000.500 440v93M687 521.500h313" />
      </g>
      <path
        d={slash(605, 252, 6, true) + slash(605, 440, 6, true) + slash(687, 521, 6) + slash(1000, 521, 6)}
        stroke="#008000"
      />
      <g stroke="#fff" shapeRendering="crispEdges">
        <path d="M687.500 252.500h313v188h-313z" stroke="#d0d0d0" />
        <path d="M681 227.500h326M687.500 215v25M1000.500 215v25" />
        <path d="M681 465.500h326M687.500 453v25M1000.500 453v25" />
        <path d="M1025.500 246v201M1013 252.500h25M1013 440.500h25" />
      </g>
      <path
        d={slash(687, 227, 8) + slash(1000, 227, 8) + slash(687, 465, 8) + slash(1000, 465, 8) +
          slash(1025, 252, 8, true) + slash(1025, 440, 8, true)}
        stroke="#fff"
      />
      <path d="M687 440.500L1000.500 253v187.500z" stroke="#f00" strokeWidth="3" strokeLinejoin="round" />
      <g fill="#00f800" fontFamily="Noto Sans" fontSize="15" fontWeight="bold" textAnchor="middle">
        <text x="843" y="219">500</text>
        <text x="1040" y="352">300</text>
        <text x="843" y="484">500</text>
      </g>
      <g fill="#c0c0c0" fontFamily="Noto Sans" fontSize="12" textAnchor="middle">
        <text x="632" y="351">300</text>
        <text x="843" y="495">500</text>
      </g>
    </svg>
  </CanvasBox>
)

const SectionDialog = () => (
  <Dialog>
    <DialogTitle>截面编辑</DialogTitle>
    <DialogBody>
      <DialogTabs $color="#f0f0f0">
        <Tab $active $wide>截面</Tab>
        <Tab>配筋</Tab>
      </DialogTabs>
      <TabPanel>
        <Band $height={26}>
          <Grip />
          <ToolItem icon="grid" label="定义网格" />
          <Separator />
          <ToolItem icon="arrow" label="画直线" off />
          <ToolItem icon="arc" label="画弧" off />
          <ToolItem icon="circle" label="画圆" off />
          <Separator />
          <ToolItem icon="cross" label="清除多边形" />
          <Separator />
          <ToolItem icon="undo" label="回退" />
          <Separator />
          <ToolItem icon="importIcon" label="导入" />
          <ToolItem icon="exportIcon" label="导出" />
          <Separator />
          <ToolItem icon="lens" label="查询多边形库" />
        </Band>
        <Band $height={29}>
          <Grip />
          <Radios>
            <label><Radio type="radio" name="offset" defaultChecked />不偏移</label>
            <label><Radio type="radio" name="offset" />正交</label>
            <label><Radio type="radio" name="offset" />极坐标</label>
          </Radios>
          <Separator />
          <SpinBox axis="X" />
          <SpinBox axis="Y" />
        </Band>
        <Drawing />
        <Foot><InputToggle>动态输入</InputToggle></Foot>
      </TabPanel>
      <Status $inset>
        <Cell $width={98}>坐标 <Small>(X: 137 Y: 259)</Small></Cell>
        <Cell>
          请选择下一点
          <Resize width="11" height="11" fill="#bbb" aria-hidden="true">
            <path d="M8 0h2v2H8zM4 4h2v2H4zM8 4h2v2H8zM0 8h2v2H0zM4 8h2v2H4zM8 8h2v2H8z" />
          </Resize>
        </Cell>
      </Status>
    </DialogBody>
  </Dialog>
)

/* --------------------------- Floating widgets ----------------------------- */

const Pointer = styled.div`
  position: absolute;
  top: 43px;
  right: 113px;
  width: 53px;
  background: #fff;
  color: #a4a4a4;
  font: 12px/26px "Noto Sans", sans-serif;
  box-shadow: 1px 2px 8px rgba(0, 0, 0, .45);
`

const PointerTitle = styled.div`
  display: flex;
  align-items: center;
  justify-content: space-between;
  height: 26px;
  padding-left: 4px;
`

const PointerClose = styled.button`
  width: 19px;
  height: 19px;
  padding: 0 0 2px;
  border: 0;
  background: #e2e2e2;
  color: #fff;
  font: 11px/16px ${UI};
`

const StartButton = styled.button`
  display: block;
  width: 100%;
  height: 23px;
  padding: 0;
  border: 1px solid #666;
  border-right-width: 2px;
  border-bottom-width: 2px;
  background: #f0f0f0;
  color: #000;
  font: 12px/18px ${UI};
`

/* Temperature bubble hanging from the top edge of the screen                 */
const Bubble = styled.div`
  position: absolute;
  top: -30px;
  left: 1016px;
  width: 87px;
  height: 47px;
  padding: 20px 0 0 32px;
  border: 1px solid #ccc;
  border-radius: 0 0 10px 0;
  background: #ececec;
  box-shadow: 0 1px 3px rgba(0, 0, 0, .3);
`

const Ball = styled.div`
  position: absolute;
  top: -32px;
  left: 990px;
  width: 52px;
  height: 52px;
  padding-top: 18px;
  border: 3px solid #f4f4f4;
  border-radius: 50%;
  background: #2484d4;
  box-shadow: 0 1px 3px rgba(0, 0, 0, .6);
  color: #10467c;
  font: bold 16px/20px ${UI};
  text-align: center;
`

/* ------------------------------ Taskbar ----------------------------------- */

const Taskbar = styled.footer`
  position: relative;
  display: flex;
  flex: none;
  height: 35px;
  padding-left: 14px;
  background: #000;
  color: #fff;
`

const TaskSearch = styled.input`
  width: 344px;
  height: 35px;
  padding: 6px 9px 0;
  border: 0;
  outline: 0;
  background: #333;
  font: 14px/20px "Noto Sans", "Noto Sans CJK SC", sans-serif;
  &::placeholder { color: #a0a0a0; opacity: 1; }
`

const Tasks = styled.div`
  display: flex;
  flex: 1;
  padding-left: 1px;
  background: #262626;
`

const TaskButton = styled.button`
  display: flex;
  align-items: center;
  justify-content: center;
  width: 49px;
  padding: 4px 0 0;
  border: 0;
  background: ${p => (p.$active ? '#505050' : 'none')};
  svg { position: relative; z-index: 1; }
`

const TaskGap = styled.i`
  width: 4px;
  height: 16px;
  margin: 12px 10px 0 11px;
  border: 1px solid #555;
  border-width: 0 1px;
`

/* Notice that shows through behind the task icons                            */
const Faint = styled.div`
  position: absolute;
  top: 12px;
  left: 861px;
  display: flex;
  gap: 11px;
  color: #10191f;
  pointer-events: none;
`

const Weather = styled.div`
  position: absolute;
  top: 4px;
  right: 251px;
  font: 12px/17px ${UI};
  text-align: center;
`

const Tray = styled.div`
  display: flex;
  align-items: center;
  width: 254px;
  padding: 4px 0 0 28px;
  gap: 8px;
`

const Clock = styled.time`
  flex: 1;
  margin-top: -4px;
  font: 12px/17px "Noto Sans", sans-serif;
  text-align: center;
`

const ShowDesktop = styled.button`
  width: 5px;
  padding: 0;
  border: 0;
  border-left: 1px solid #555;
  background: #000;
`

const taskIcons = {
  pinwheel: (
    <g fill="#eee">
      <path d="M11 11H4a3 3 0 0 1-2-3V4a3 3 0 0 1 3-3c4 0 6 3 6 10z" />
      <path d="M12 10c0-5 2-8 5-8h3a3 3 0 0 1 3 3v4c-1 3-7 4-11 1z" />
      <path d="M13 13h7a3 3 0 0 1 2 3v4a3 3 0 0 1-3 3c-4 0-6-3-6-10z" />
      <path d="M12 14c0 5-2 8-5 8H4a3 3 0 0 1-3-3v-4c1-3 7-4 11-1z" />
    </g>
  ),
  swirl: (
    <g stroke="#e4e4e4" strokeWidth="1.300">
      <path d="M21 4c-3 0-4-1-8-1-6 0-9 4-9 9s4 9 9 9c4 0 7-3 7-7s-3-6-6-6-5 2-5 4 2 5 5 4c2-1 2-3 1-4" />
      <path d="M21 4c-1 2-3 3-5 2-6-2-9 2-9 6s3 7 7 7" />
    </g>
  ),
  edge: <path d="M2 12C3 5 7 2 12 2c6 0 10 4 10 9v3H9c0 4 3 5 6 5 2 0 4-1 6-2v4c-2 1-4 2-7 2-6 0-10-4-10-9 0-3 2-6 5-7-4 0-6 2-7 5zm7-2h7c0-2-1-4-3-4s-4 1-4 4z" fill="#0a78d4" />,
  explorer: (
    <>
      <path d="M1 3h8l2 2h12v16H1z" fill="#ffd76a" />
      <path d="M1 3h8l2 2H1z" fill="#e8a93a" />
      <path d="M5 21v-8h14v8h-4v-4H9v4z" fill="#31b5e8" />
    </>
  ),
  store: (
    <>
      <path d="M2 7l19-1 1 16-19 1z" fill="#fff" />
      <path d="M8 8V4c0-4 8-4 8 0v4" stroke="#fff" strokeWidth="1.500" />
      <path d="M6 11l5-1v5H6zM12 10l6-1v6h-6zM6 16h5v4l-5-1zM12 16h6v5l-6-1z" fill="#222" />
    </>
  ),
  browser: (
    <>
      <circle cx="12" cy="12" r="10" fill="#fff" />
      <circle cx="12" cy="12" r="9" fill="#62c62e" />
      <path d="M1 22C-1 17 12 3 22 2c-8 4-17 13-18 20z" fill="#8ade4a" />
      <path d="M6 12c0-4 3-6 6-6s6 2 6 7H10c0 3 4 4 7 2-1 2-3 3-5 3-4 0-6-3-6-6z" fill="#fff" />
      <path d="M10 11h4c0-3-4-3-4 0z" fill="#62c62e" />
    </>
  ),
  video: (
    <>
      <path d="M0 0h24v24H0z" fill="#333" />
      <path d="M4 5h16v11H4zM7 18h10v1H7z" fill="#0ec20e" />
      <path d="M10 8l5 3-5 3z" fill="#054d05" />
    </>
  ),
  dragon: (
    <>
      <path d="M23 1c-1 4-4 5-7 4C10 4 7 8 7 12s3 6 6 5c3 0 4-4 2-5l-3 1c0-3 3-5 6-4 4 2 3 7 1 10-2 4-5 4-8 4C5 23 1 18 1 12 1 5 7 0 14 1c4 1 6 1 9 0z" fill="#1596e6" />
      <path d="M3 13c0-6 5-9 11-9" stroke="#6fd0ff" />
    </>
  ),
  dragonRed: (
    <>
      <path d="M23 1c-1 4-4 5-7 4C10 4 7 8 7 12s3 6 6 5c3 0 4-4 2-5l-3 1c0-3 3-5 6-4 4 2 3 7 1 10-2 4-5 4-8 4C5 23 1 18 1 12 1 5 7 0 14 1c4 1 6 1 9 0z" fill="#2087b6" />
      <path d="M0 11l5-3 11 10-4 6z" fill="#e64a5c" />
      <path d="M2 11l10 10" stroke="#ffc0c8" strokeDasharray="2 1" />
    </>
  ),
  anchor: (
    <>
      <rect width="24" height="24" rx="4" fill="#1590f2" />
      <path d="M12 19V7c0-3 4-3 4 0M5 10c0 4 3 3 7 3s7 1 7-3M12 17c0 3-4 3-4 0" stroke="#fff" strokeWidth="2" />
    </>
  ),
  castle: (
    <>
      <path d="M0 0h24v24H0z" fill="#f5a81c" />
      <path d="M0 0h12v12H0z" fill="#e84a28" />
      <path d="M12 0h12v12H12z" fill="#84c428" />
      <path d="M12 12h12v12H12z" fill="#1ba5d8" />
      <path d="M5 3v18h14V3M5 7h14M9 4v3M12 4v3M15 4v3M8 11h8v7H8zM10 14.500h4" stroke="#fff" strokeWidth="1.800" />
    </>
  ),
  pointofix: (
    <>
      <path d="M0 0h12v12H0z" fill="#76b5ea" />
      <path d="M12 0h12v12H12z" fill="#8fd98f" />
      <path d="M0 12h12v12H0z" fill="#f7cf96" />
      <path d="M12 12h12v12H12z" fill="#e6f0b0" />
      <circle cx="12" cy="12" r="8" fill="#fff" fillOpacity=".3" />
      <path d="M1 1l11 10" stroke="#d23c5c" strokeWidth="4" />
      <circle cx="12" cy="12" r="3.500" fill="#f01818" />
      <path d="M14 13v10l2-2 2 4 2-1-2-4h4z" fill="#fff" stroke="#222" />
    </>
  )
}

const TrayIcon = ({ children, label }) => (
  <PlainButton aria-label={label}>
    <Svg viewBox="0 0 16 16" fill="none" stroke="#fff">{children}</Svg>
  </PlainButton>
)

const Task = ({ name, active }) => (
  <TaskButton $active={active} aria-label={name}>
    <Svg $size={24} viewBox="0 0 24 24" fill="none">{taskIcons[name]}</Svg>
  </TaskButton>
)

const DesktopBar = () => (
  <Taskbar>
    <TaskSearch placeholder="搜索 Web 和 Windows" aria-label="搜索" />
    <Tasks>
      <Task name="pinwheel" />
      <Task name="swirl" />
      <TaskGap />
      {['edge', 'explorer', 'store', 'browser', 'video', 'dragon', 'dragonRed'].map(name => (
        <Task key={name} name={name} />
      ))}
      <Task name="anchor" active />
      <Task name="castle" />
      <Task name="pointofix" />
    </Tasks>
    <Faint>
      <span>加密锁设置</span>
      <span>客服电话:</span>
      <Half>4000-166-166</Half>
    </Faint>
    <Weather>温度<br />读取中...</Weather>
    <Tray>
      <TrayIcon label="更多"><path d="M2 11l6-6 6 6" strokeWidth="1.500" /></TrayIcon>
      <TrayIcon label="电源">
        <path d="M5.500 5.500h9v6h-9z" />
        <path d="M7 7h6v3H7zM15 7h1v3h-1z" fill="#fff" stroke="none" />
        <path d="M.5 4v3h4V4zM2.500 7v3.500H5M1.500 2v2M3.500 2v2" />
      </TrayIcon>
      <TrayIcon label="网络">
        <path d="M2 14C2 7 7 2 14 2M5 14c0-5 4-9 9-9M8 14c0-3 3-6 6-6" strokeWidth="1.300" />
        <circle cx="12" cy="13" r="1.500" fill="#fff" />
      </TrayIcon>
      <TrayIcon label="音量">
        <path d="M1 6h2l4-3v10l-4-3H1zM9 6c1 1 1 3 0 4M11 4c2 2 2 6 0 8M13 2c3 3 3 9 0 12" />
      </TrayIcon>
      <TrayIcon label="通知">
        <path d="M1 1h14v12H1z" fill="#fff" />
        <path d="M3 4h10M3 7h7M3 10h5" stroke="#000" />
        <circle cx="12" cy="11" r="3.500" fill="#fff" stroke="#000" />
        <path d="M10 11h4" stroke="#000" />
      </TrayIcon>
      <span>简体</span>
      <Clock>16:40<br />2016/7/25</Clock>
    </Tray>
    <ShowDesktop aria-label="显示桌面" />
  </Taskbar>
)

/* -------------------------------- Page ------------------------------------ */

export default function App() {
  return (
    <Window>
      <GlobalStyle />
      <Bands>
        <Band $min={116}>
          <ToolItem icon="open" caret cropped />
          <ToolItem icon="save" />
          <Separator $height={24} />
          <ToolItem icon="undo" caret />
          <Chevron $end>»</Chevron>
        </Band>
        <Band>
          <ToolItem icon="paint" label="绘图" />
          <ToolItem icon="sum" label="汇总计算" />
          <ToolItem icon="cloud" label="云检查" />
          <ToolItem icon="level" label="平齐板顶" off />
          <ToolItem icon="find" label="查找图元" off />
          <ToolItem icon="glasses" label="查看钢筋量" off />
          <ToolItem icon="pick" label="批量选择" off />
          <ToolItem icon="rebar" label="钢筋三维" off />
          <Chevron>»</Chevron>
        </Band>
        <Band $grow>
          <ToolItem icon="cube" label="三维" off caret boxed />
          <ToolItem icon="wire" label="俯视" off caret />
          <ToolItem icon="orbit" label="动态观察" off />
          <ToolItem icon="part" label="局部三维" off />
          <Separator $height={18} />
          <ToolItem icon="zoomin" label="全屏" off />
          <ToolItem icon="zoom" label="缩放" off caret />
          <ToolItem icon="pan" label="平移" off caret />
          <ToolItem icon="rotate" label="屏幕旋转" off caret="tight" />
          <Chevron $end>»</Chevron>
        </Band>
      </Bands>
      <Main>
        <NavPane />
        <Work>
          <Band $height={28}>
            <ToolItem icon="create" label="新建" caret="tight" />
            <ToolItem icon="cross" label="删除" />
            <ToolItem icon="copy" label="复制" />
            <ToolItem icon="rename" label="重命名" />
            <Separator />
            <FloorField>
              楼层
              <FloorSelect><option>基础层</option></FloorSelect>
            </FloorField>
          </Band>
          <Panes>
            <Parts>
              <SearchRow>
                <SearchInput placeholder="搜索构件..." aria-label="搜索构件" />
                <PlainButton type="button" aria-label="搜索"><Icon name="search" /></PlainButton>
              </SearchRow>
              <PartTree>
                <PartRow>
                  <Expander aria-label="自定义线" />
                  <Dots />
                  <Icon name="line" />
                  自定义线
                </PartRow>
                <PartRow $child>
                  <Guide /><Icon name="gear" /><PartName>ZDYX-1</PartName>
                </PartRow>
                <PartRow $child>
                  <Guide $last /><Icon name="gear" /><PartName $selected>ZDYX-2</PartName>
                </PartRow>
              </PartTree>
            </Parts>
            <Props>
              <TabStrip><Tab $active>属性编辑</Tab></TabStrip>
              <Sheet>
                <SheetFrame>
                  <TableClip><PropertyTable /></TableClip>
                  <Track $width={15}>
                    <Arrow />
                    <Thumb $size={383} />
                    <Space $size={144} />
                    <Arrow down />
                  </Track>
                </SheetFrame>
              </Sheet>
            </Props>
          </Panes>
        </Work>
        <SectionDialog />
        <Pointer>
          <PointerTitle>Poi...<PointerClose aria-label="关闭">x</PointerClose></PointerTitle>
          <StartButton>开始</StartButton>
        </Pointer>
      </Main>
      <Status>
        <Cell $width={114} />
        <Cell $width={78}>层高<Half>:3m</Half></Cell>
        <Cell $width={98}>底标高<Half>:-3.05m</Half></Cell>
        <Cell $width={48}><Half>0</Half></Cell>
        <Cell>名称在当前层当前构件类型下不允许重名</Cell>
        <Cell $width={70}><Half>824.1 FPS</Half></Cell>
      </Status>
      <DesktopBar />
      <Bubble>读取中...</Bubble>
      <Ball>24°C</Ball>
    </Window>
  )
}
